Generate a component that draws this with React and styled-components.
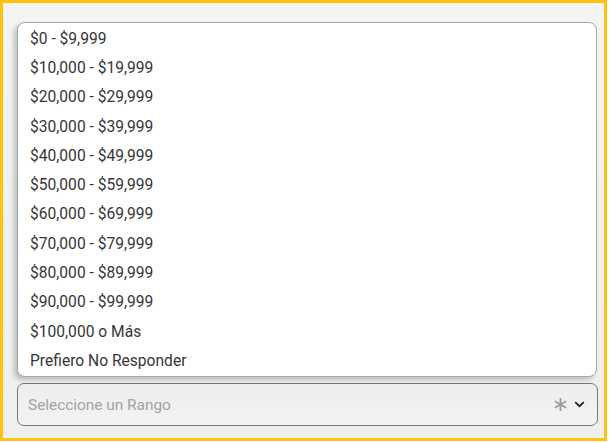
import React from "react";
import styled, { createGlobalStyle } from "styled-components";

const Global = createGlobalStyle`
  html, body { margin: 0; padding: 0; background: #ffffff; }
  * { box-sizing: border-box; }
`;

const Frame = styled.div`
  width: 607px;
  height: 441px;
  border: 3px solid #ffc20e;
  background: linear-gradient(180deg, #f4f4f4 0%, #efefef 100%);
  padding: 19px 6px 0 14px;
  display: flex;
  flex-direction: column;
  gap: 6px;
  font-family: Roboto, "Liberation Sans", sans-serif;
`;

const List = styled.ul`
  list-style: none;
  margin: 0;
  padding: 1px 0 0;
  width: 580px;
  height: 355px;
  background: #ffffff;
  border: 1px solid #a9a9a9;
  border-radius: 8px;
  box-shadow: -3px 3px 5px rgba(0, 0, 0, 0.22);
  overflow: hidden;
`;

const Option = styled.li`
  height: 29.3px;
  display: flex;
  align-items: center;
  padding-left: 12px;
  font-size: 15.6px;
  color: #363636;
`;

const Select = styled.div`
  width: 581px;
  height: 43px;
  border: 1px solid #777777;
  border-radius: 7px;
  background: linear-gradient(180deg, #ededed 0%, #f3f3f3 100%);
  display: flex;
  align-items: center;
  padding: 0 12px 0 10px;
  gap: 7px;
`;

const Placeholder = styled.span`
  flex: 1;
  font-size: 15.4px;
  color: #a3a3a3;
`;

const Icon = styled.svg`
  display: block;
  flex: none;
`;

const options = [
  "$0 - $9,999",
  "$10,000 - $19,999",
  "$20,000 - $29,999",
  "$30,000 - $39,999",
  "$40,000 - $49,999",
  "$50,000 - $59,999",
  "$60,000 - $69,999",
  "$70,000 - $79,999",
  "$80,000 - $89,999",
  "$90,000 - $99,999",
  "$100,000 o Más",
  "Prefiero No Responder",
];

export default function App() {
  return (
    <>
      <Global />
      <Frame>
        <List>
          {options.map((o) => (
            <Option key={o}>{o}</Option>
          ))}
        </List>
        <Select>
          <Placeholder>Seleccione un Rango</Placeholder>
          <Icon width="13" height="13" viewBox="0 0 13 13">
            <g stroke="#9a9a9a" strokeWidth="1.8" strokeLinecap="butt">
              <line x1="6.5" y1="0" x2="6.5" y2="13" />
              <line x1="0.9" y1="3.25" x2="12.1" y2="9.75" />
              <line x1="0.9" y1="9.75" x2="12.1" y2="3.25" />
            </g>
          </Icon>
          <Icon width="11" height="7" viewBox="0 0 11 7">
            <polyline points="1.2,1.2 5.5,5.2 9.8,1.2" fill="none" stroke="#222" strokeWidth="1.8" />
          </Icon>
        </Select>
      </Frame>
    </>
  );
}
